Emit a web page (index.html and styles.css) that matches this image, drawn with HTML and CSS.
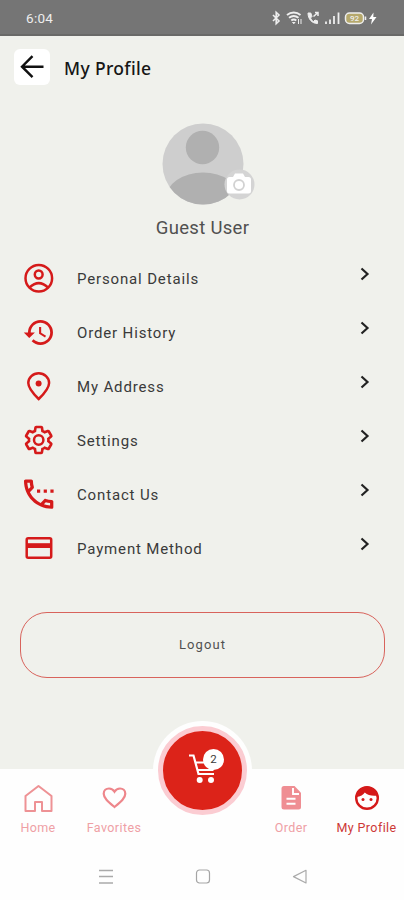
FILE: index.html
```html
<!DOCTYPE html>
<html lang="en">
<head>
    <meta charset="UTF-8">
    <meta name="viewport" content="width=device-width, initial-scale=1.0">
    <title>My Profile</title>
    <link rel="stylesheet" href="styles.css">
</head>
<body>
    <div class="app">
        <!-- Status bar -->
        <div class="status-bar">
            <span class="time">6:04</span>
            <svg class="status-icons" width="110" height="16" viewBox="0 0 110 16" fill="none" stroke="#eee">
                <path d="M3 5l6 6-2.800 2.700V2.300L9 5l-6 6" stroke-width="1.600"/>
                <path d="M17 5c4-3.300 9.500-3.300 13.500 0M19 7.800c3-2.400 6.500-2.400 9.500 0M21.300 10.500c1.600-1.300 3.300-1.300 5 0" stroke-width="1.900"/>
                <path d="M22.500 12.500l1.300 1.300 1.200-1.300zM28.500 9v5M31 9v5" stroke-width="1"/>
                <path d="M38 3c0 6 4 10.500 9.500 10.500v-2.700l-2.500-.8-1.500 1.500c-1.500-1-2.400-2-3-3.500L42 6.500 40.800 3z" fill="#eee"/>
                <path d="M43.500 6.500l4.500-4M45 2.500h3V6" stroke-width="1.500"/>
                <path d="M56 14v-2.500M60 14V9.500M64 14V6M68.500 14V2.500" stroke-width="1.800"/>
                <rect x="75.500" y="3" width="18" height="10.500" rx="4" fill="#b5a86c" stroke-width="1.500"/>
                <path d="M95.500 6.500v3.500" stroke-width="1.500"/>
                <text x="84.500" y="11.300" class="battery-text">92</text>
                <path d="M103.500 2.500l-4.500 6.500h3l-1 5.500 5.500-7.500h-3.200z" fill="#fff" stroke="none"/>
            </svg>
        </div>

        <!-- Header -->
        <div class="header">
            <button class="back-btn" title="Back">
                <svg width="26" height="26" viewBox="0 0 26 26" fill="none" stroke="#111" stroke-width="2.400">
                    <path d="M24.500 12.700H3M13.500 2.200L3 12.700l10.500 10.500"/>
                </svg>
            </button>
            <h1 class="title">My Profile</h1>
        </div>

        <!-- Avatar -->
        <div class="profile">
            <div class="avatar">
                <svg width="82" height="82" viewBox="0 0 82 82">
                    <defs>
                        <clipPath id="avatarClip"><circle cx="41" cy="41" r="40.500"/></clipPath>
                    </defs>
                    <circle cx="41" cy="41" r="40.500" fill="#cecece"/>
                    <circle cx="40.500" cy="24.500" r="16.700" fill="#b0b0b0"/>
                    <ellipse cx="41" cy="75" rx="37" ry="25.500" fill="#b0b0b0" clip-path="url(#avatarClip)"/>
                </svg>
                <svg class="camera" width="31" height="31" viewBox="0 0 31 31">
                    <circle cx="15.500" cy="15.500" r="15" fill="#d4d4d4"/>
                    <path d="M5.500 8H9l2-3.500h8L21 8h3.500Q27 8 27 10.500V22q0 2.500-2.500 2.500h-19Q3 24.500 3 22V10.500Q3 8 5.500 8z" fill="#fff"/>
                    <circle cx="15" cy="16" r="5" fill="#fff" stroke="#d2d2d2" stroke-width="1.800"/>
                </svg>
            </div>
            <div class="user-name">Guest User</div>
        </div>

        <!-- Menu -->
        <div class="menu">
            <div class="menu-item">
                <svg class="menu-icon" viewBox="0 0 36 36">
                    <circle cx="17.800" cy="17.300" r="13.300"/>
                    <circle cx="17.700" cy="13.500" r="3.900"/>
                    <path d="M8.500 26.500Q17.800 17.800 27 26.500"/>
                </svg>
                <span class="menu-label">Personal Details</span>
                <svg class="chevron" viewBox="0 0 10 14"><path d="M1.500 1.500L7.500 7l-6 5.500"/></svg>
            </div>
            <div class="menu-item">
                <svg class="menu-icon" viewBox="0 0 36 36">
                    <path class="solid" transform="translate(1.400 .8) scale(1.390)" d="M13 3a9 9 0 0 0-9 9H1l3.890 3.890.07.14L9 12H6c0-3.870 3.130-7 7-7s7 3.130 7 7-3.130 7-7 7c-1.930 0-3.680-.79-4.940-2.060l-1.420 1.420A8.954 8.954 0 0 0 13 21a9 9 0 0 0 0-18zm-1 5v5l4.280 2.540.72-1.210-3.500-2.080V8H12z"/>
                </svg>
                <span class="menu-label">Order History</span>
                <svg class="chevron" viewBox="0 0 10 14"><path d="M1.500 1.500L7.500 7l-6 5.500"/></svg>
            </div>
            <div class="menu-item">
                <svg class="menu-icon" viewBox="0 0 36 36">
                    <path d="M17.700 30C12 24.500 7.300 19.500 7.300 14a10.400 9.800 0 0 1 20.800 0C28.100 19.500 23.400 24.500 17.700 30z"/>
                    <circle class="solid" cx="17.600" cy="14.500" r="3"/>
                </svg>
                <span class="menu-label">My Address</span>
                <svg class="chevron" viewBox="0 0 10 14"><path d="M1.500 1.500L7.500 7l-6 5.500"/></svg>
            </div>
            <div class="menu-item">
                <svg class="menu-icon" viewBox="0 0 36 36">
                    <path class="gear" transform="translate(2.100 1.400) scale(1.300)" d="M19.430 12.980c.04-.32.07-.64.07-.98s-.03-.66-.07-.98l2.110-1.650c.19-.15.24-.42.12-.64l-2-3.460c-.09-.16-.26-.25-.44-.25-.06 0-.12.01-.17.03l-2.490 1c-.52-.4-1.080-.73-1.690-.98l-.38-2.650C14.460 2.180 14.250 2 14 2h-4c-.25 0-.46.18-.49.42l-.38 2.650c-.61.25-1.170.59-1.690.98l-2.490-1c-.06-.02-.12-.03-.18-.03-.17 0-.34.09-.43.25l-2 3.460c-.13.22-.07.49.12.64l2.110 1.650c-.04.32-.07.65-.07.98s.03.66.07.98l-2.110 1.650c-.19.15-.24.42-.12.64l2 3.460c.09.16.26.25.44.25.06 0 .12-.01.17-.03l2.490-1c.52.4 1.080.73 1.690.98l.38 2.650c.03.24.24.42.49.42h4c.25 0 .46-.18.49-.42l.38-2.650c.61-.25 1.170-.59 1.690-.98l2.490 1c.06.02.12.03.18.03.17 0 .34-.09.43-.25l2-3.460c.12-.22.07-.49-.12-.64z"/>
                    <circle cx="17.700" cy="17" r="4.700"/>
                </svg>
                <span class="menu-label">Settings</span>
                <svg class="chevron" viewBox="0 0 10 14"><path d="M1.500 1.500L7.500 7l-6 5.500"/></svg>
            </div>
            <div class="menu-item">
                <svg class="menu-icon" viewBox="0 0 36 36">
                    <path class="solid" transform="translate(-1.900 -2.400) scale(1.630)" d="M6.540 5c.06.89.21 1.760.45 2.590l-1.200 1.200c-.41-1.200-.67-2.470-.76-3.790h1.510m9.860 12.020c.85.24 1.720.39 2.600.45v1.490c-1.320-.09-2.590-.35-3.800-.75l1.200-1.190M7.500 3H4c-.55 0-1 .45-1 1 0 9.390 7.610 17 17 17 .55 0 1-.45 1-1v-3.490c0-.55-.45-1-1-1-1.240 0-2.450-.2-3.570-.57a.84.84 0 0 0-.31-.05c-.26 0-.51.1-.71.29l-2.200 2.200a15.149 15.149 0 0 1-6.590-6.590l2.200-2.200c.28-.28.36-.67.25-1.020A11.360 11.360 0 0 1 8.500 4c0-.55-.45-1-1-1z"/>
                    <path class="solid" d="M16 12.500h3.200v3.200H16zM22.700 12.500h3.200v3.200h-3.200zM29.400 12.500h3.200v3.200h-3.200z"/>
                </svg>
                <span class="menu-label">Contact Us</span>
                <svg class="chevron" viewBox="0 0 10 14"><path d="M1.500 1.500L7.500 7l-6 5.500"/></svg>
            </div>
            <div class="menu-item">
                <svg class="menu-icon" viewBox="0 0 36 36">
                    <rect x="5.700" y="7.300" width="24.500" height="19.500" rx="1.500"/>
                    <path class="solid" d="M5 12.200h26v4.800H5z"/>
                </svg>
                <span class="menu-label">Payment Method</span>
                <svg class="chevron" viewBox="0 0 10 14"><path d="M1.500 1.500L7.500 7l-6 5.500"/></svg>
            </div>
        </div>

        <button class="logout-btn">Logout</button>

        <!-- Bottom navigation -->
        <div class="bottom-nav">
            <div class="nav-item">
                <svg width="30" height="30" viewBox="0 0 30 30" fill="none" stroke="#ee9295" stroke-width="2">
                    <path d="M2.500 13L15.500 3l13 10V28h-9.500v-9h-7v9H2.500z" stroke-linejoin="round"/>
                </svg>
                <span>Home</span>
            </div>
            <div class="nav-item">
                <svg width="30" height="30" viewBox="0 0 30 30" fill="none" stroke="#ee868b" stroke-width="2.200">
                    <path d="M15.500 24C9 18.500 4.700 15 4.700 10.800 4.700 7.500 7.200 5.500 10 5.500c2.300 0 4.300 1.200 5.500 3.200 1.200-2 3.200-3.200 5.500-3.200 2.800 0 5.300 2 5.300 5.300 0 4.200-4.300 7.700-10.800 13.200z"/>
                </svg>
                <span>Favorites</span>
            </div>
            <div class="nav-item nav-order">
                <svg width="30" height="30" viewBox="0 0 30 30">
                    <path d="M8 3h10.500l6.500 6.800V24q0 2.500-2.500 2.500H8Q5.500 26.500 5.500 24V5.500Q5.500 3 8 3z" fill="#ef8e93"/>
                    <path d="M17 5v6h6M10.500 15.700h9M10.500 20.700h9" fill="none" stroke="#fff" stroke-width="1.900"/>
                </svg>
                <span>Order</span>
            </div>
            <div class="nav-item active">
                <svg width="30" height="30" viewBox="0 0 30 30">
                    <circle cx="15" cy="15" r="10.800" fill="#fff" stroke="#d51a1a" stroke-width="2.400"/>
                    <path d="M4 14c4.500-.5 7.500-2.300 8.800-4.500 3 2.800 7.500 3.800 12.700 3C24.500 7.500 20.500 3.500 15 3.500S4.500 8 4 14z" fill="#d51a1a"/>
                    <circle cx="11" cy="16.500" r="1.500" fill="#d51a1a"/>
                    <circle cx="19" cy="16.500" r="1.500" fill="#d51a1a"/>
                </svg>
                <span>My Profile</span>
            </div>

            <div class="cart-btn">
                <svg width="34" height="34" viewBox="0 0 34 34" fill="none" stroke="#fff" stroke-width="2.200">
                    <path d="M3 4.500h4.500l5 18.500h15.500M9 11.500H28.500l-2 7.500H11.500"/>
                    <circle cx="13.700" cy="29" r="3" fill="#fff" stroke="none"/>
                    <circle cx="25" cy="29" r="3" fill="#fff" stroke="none"/>
                </svg>
                <span class="cart-badge">2</span>
            </div>
        </div>

        <!-- System buttons -->
        <div class="system-bar">
            <svg width="16" height="16" viewBox="0 0 16 16" fill="none" stroke="#aaa" stroke-width="1.400">
                <path d="M1 1.500h14M1 7.500h14M1 14h14"/>
            </svg>
            <svg width="16" height="16" viewBox="0 0 16 16" fill="none" stroke="#a5a5a5" stroke-width="1.200">
                <rect x="1.500" y="1" width="13" height="13" rx="3"/>
            </svg>
            <svg width="16" height="16" viewBox="0 0 16 16" fill="none" stroke="#aaa" stroke-width="1.200">
                <path d="M14 1.300v12.700L1.500 7.600z" stroke-linejoin="round"/>
            </svg>
        </div>
    </div>
</body>
</html>
```
FILE: styles.css
```css
* {
    margin: 0;
    padding: 0;
    box-sizing: border-box;
}

body {
    font-family: Roboto, sans-serif;
    background: #f0f1ec;
    color: #3a3a3a;
}

svg {
    display: block;
    flex-shrink: 0;
}

button {
    font-family: inherit;
    background: none;
    border: none;
}

.app {
    display: flex;
    flex-direction: column;
    width: 404px;
    height: 900px;
    overflow: hidden;
}

.status-bar {
    display: flex;
    align-items: center;
    justify-content: space-between;
    height: 36px;
    padding: 2px 24px 0 26px;
    background: #757575;
    border-bottom: 2px solid #696968;
}

.time {
    font-size: 13.5px;
    letter-spacing: 0.3px;
    color: #eee;
}

.battery-text {
    font-size: 8px;
    font-weight: 500;
    text-anchor: middle;
    fill: #eee;
    stroke: none;
}

.header {
    display: flex;
    align-items: center;
    gap: 14px;
    height: 62px;
    padding: 0 14px;
}

.back-btn {
    display: flex;
    align-items: center;
    justify-content: center;
    width: 36px;
    height: 36px;
    background: white;
    border-radius: 6px;
}

.title {
    padding-top: 1px;
    font-family: 'Noto Sans', sans-serif;
    font-size: 17.5px;
    font-weight: 500;
    letter-spacing: 0.35px;
    color: #161616;
}

.profile {
    display: flex;
    flex-direction: column;
    align-items: center;
    height: 154px;
    padding: 25px 0 0 1px;
}

.avatar {
    position: relative;
}

.camera {
    position: absolute;
    right: -11px;
    bottom: 5px;
}

.user-name {
    margin-top: 11px;
    font-size: 18.5px;
    line-height: 24px;
    letter-spacing: 0.3px;
    color: #505050;
}

.menu-item {
    display: flex;
    align-items: center;
    height: 54px;
    padding: 0 34px 0 21px;
}

.menu-icon {
    width: 36px;
    height: 36px;
    fill: none;
    stroke: #d51a1a;
    stroke-width: 2.5;
}

.menu-icon .solid {
    fill: #d51a1a;
    stroke: none;
}

.menu-icon .gear {
    stroke-width: 2;
}

.menu-label {
    flex: 1;
    margin-left: 20px;
    font-size: 15px;
    letter-spacing: 0.85px;
}

.chevron {
    width: 10px;
    height: 14px;
    margin-bottom: 10px;
    fill: none;
    stroke: #222;
    stroke-width: 2.2;
}

.logout-btn {
    height: 66px;
    margin: 36px 19px 0 20px;
    padding-bottom: 2px;
    border: 1px solid #d8635c;
    border-radius: 27px;
    font-size: 13px;
    letter-spacing: 1.1px;
    color: #505050;
}

.bottom-nav {
    position: relative;
    display: grid;
    grid-template-columns: 76px 76px 101px 76px 75px;
    height: 84px;
    margin-top: auto;
    padding-top: 14px;
    background: #fefefe;
}

.nav-item {
    display: flex;
    flex-direction: column;
    align-items: center;
    gap: 7px;
    font-size: 12.5px;
    line-height: 16px;
    letter-spacing: 0.4px;
    white-space: nowrap;
    color: #efa0a5;
}

.nav-order {
    grid-column: 4;
}

.nav-item.active {
    color: #cd3836;
}

.cart-btn {
    position: absolute;
    top: -43px;
    left: 158px;
    width: 89px;
    height: 89px;
    padding: 20px 0 0 23px;
    background: #dc2319;
    border: 5px solid #fbccd2;
    border-radius: 50%;
    box-shadow: 0 0 0 5px #fefefe;
}

.cart-badge {
    position: absolute;
    top: 18px;
    left: 40px;
    width: 21px;
    height: 21px;
    background: white;
    border-radius: 50%;
    font-size: 11.5px;
    line-height: 21px;
    text-align: center;
}

.system-bar {
    display: flex;
    align-items: center;
    justify-content: center;
    gap: 81px;
    height: 47px;
    padding-left: 1px;
    background: #fefefe;
}
```
